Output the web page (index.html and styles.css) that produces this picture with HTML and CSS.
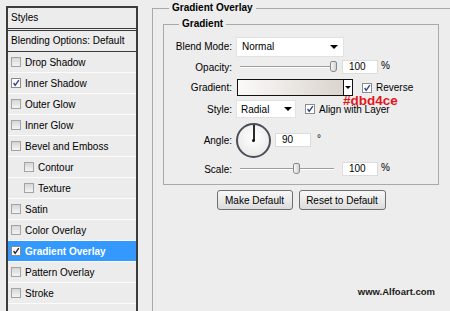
FILE: index.html
```html
<!DOCTYPE html>
<html>
<head>
	<title>Layer Style - Gradient Overlay</title>
	<meta charset="utf-8">
	<link rel="stylesheet" href="styles.css">
</head>
<body>
	<div class="styles-panel">
		<div class="panel-title">Styles</div>
		<div class="panel-blend">Blending Options: Default</div>
		<ul class="layer-list">
			<li><span class="cb"></span>Drop Shadow</li>
			<li><span class="cb on"><svg viewBox="0 0 10 10"><path d="M2 5 L4 8 L8.5 1.5" /></svg></span>Inner Shadow</li>
			<li><span class="cb"></span>Outer Glow</li>
			<li><span class="cb"></span>Inner Glow</li>
			<li><span class="cb"></span>Bevel and Emboss</li>
			<li class="sub"><span class="cb"></span>Contour</li>
			<li class="sub"><span class="cb"></span>Texture</li>
			<li><span class="cb"></span>Satin</li>
			<li><span class="cb"></span>Color Overlay</li>
			<li class="active"><span class="cb on"><svg viewBox="0 0 10 10"><path d="M2 5 L4 8 L8.5 1.5" /></svg></span>Gradient Overlay</li>
			<li><span class="cb"></span>Pattern Overlay</li>
			<li><span class="cb"></span>Stroke</li>
		</ul>
	</div>

	<div class="effect">
		<fieldset class="group outer">
			<legend>Gradient Overlay</legend>
			<fieldset class="group inner">
				<legend>Gradient</legend>

				<div class="row r-blend">
					<label class="lbl">Blend Mode:</label>
					<div class="select wide"><span>Normal</span><i class="arrow"></i></div>
				</div>

				<div class="row r-opacity">
					<label class="lbl">Opacity:</label>
					<div class="slider"><i class="thumb" style="left:94px"></i></div>
					<span class="num">100</span><span class="unit">%</span>
				</div>

				<div class="row r-gradient">
					<label class="lbl">Gradient:</label>
					<div class="swatch"></div>
					<div class="swatch-drop"><i class="arrow small"></i></div>
					<div class="check"><span class="cb on"><svg viewBox="0 0 10 10"><path d="M2 5 L4 8 L8.5 1.5" /></svg></span>Reverse</div>
					<span class="hex">#dbd4ce</span>
				</div>

				<div class="row r-style">
					<label class="lbl">Style:</label>
					<div class="select short"><span>Radial</span><i class="arrow"></i></div>
					<div class="check"><span class="cb on"><svg viewBox="0 0 10 10"><path d="M2 5 L4 8 L8.5 1.5" /></svg></span>Align with Layer</div>
				</div>

				<div class="row r-angle">
					<label class="lbl">Angle:</label>
					<div class="dial"></div>
					<span class="num angle-num">90</span><span class="deg">°</span>
				</div>

				<div class="row r-scale">
					<label class="lbl">Scale:</label>
					<div class="slider"><i class="thumb" style="left:57px"></i></div>
					<span class="num">100</span><span class="unit">%</span>
				</div>
			</fieldset>

			<div class="buttons">
				<button class="btn btn-make">Make Default</button>
				<button class="btn btn-reset">Reset to Default</button>
			</div>

			<div class="credit">www.Alfoart.com</div>
		</fieldset>
	</div>
</body>
</html>
```
FILE: styles.css
```css
body {
	margin: 0;
	height: 311px;
	overflow: hidden;
	display: flex;
	align-items: flex-start;
	background-color: #ededed;
	font-family: "Liberation Sans", Arial, sans-serif;
	font-size: 10px;
	color: #000;
}

/* left list of layer styles */
.styles-panel {
	box-sizing: border-box;
	width: 132px;
	height: 305px;
	margin: 6px 0 0 6px;
	border: 2px solid #3c3c3c;
	border-bottom: 0;
	background-color: #ececec;
	flex: none;
}
.panel-title {
	height: 20px;
	line-height: 20px;
	padding-left: 3px;
	border-bottom: 3px double #3c3c3c;
}
.panel-blend {
	height: 20px;
	line-height: 20px;
	padding-left: 3px;
	border-bottom: 1px solid #3c3c3c;
}
.layer-list {
	list-style: none;
	margin: 0;
	padding: 0;
}
.layer-list li {
	display: flex;
	align-items: center;
	gap: 4px;
	height: 20px;
	padding-left: 3px;
	border-bottom: 1px solid #fbfbfb;
}
.layer-list li.sub {
	padding-left: 16px;
}
.layer-list li.active {
	background-color: #3399ff;
	color: #fff;
	font-weight: bold;
}

/* checkbox */
.cb {
	box-sizing: border-box;
	display: inline-flex;
	align-items: center;
	justify-content: center;
	width: 10px;
	height: 10px;
	border: 1px solid #a3a3a3;
	background: linear-gradient(#d6d6d6, #f4f4f4);
	flex: none;
}
.cb.on {
	background: #fff;
	border-color: #8c8c8c;
}
.cb svg {
	width: 8px;
	height: 8px;
}
.cb path {
	fill: none;
	stroke: #2d3f8f;
	stroke-width: 1.7;
}
.active .cb path {
	stroke: #222;
}

/* right side */
.effect {
	margin: 2px 0 0 14px;
}
.group {
	margin: 0;
	padding: 0;
	border: 1px solid #a9a9a9;
	min-width: 0;
}
.group > legend {
	padding: 0 3px;
	font-weight: bold;
	line-height: 12px;
}
.outer {
	box-sizing: border-box;
	width: 310px;
	height: 309px;
	border-bottom: 0;
}
.outer > legend {
	margin-left: 16px;
}
.inner {
	box-sizing: border-box;
	width: 276px;
	margin: 4px 0 0 10px;
	padding: 6px 0 6px 0;
}
.inner > legend {
	margin-left: 15px;
}

.row {
	display: flex;
	align-items: center;
}
.lbl {
	width: 68px;
	margin-right: 4px;
	text-align: right;
	flex: none;
}
.r-blend { height: 21px; }
.r-opacity { height: 20px; }
.r-gradient { height: 21px; position: relative; }
.r-style { height: 22px; }
.r-angle { height: 40px; }
.r-scale { height: 18px; }

.select {
	box-sizing: border-box;
	display: flex;
	align-items: center;
	justify-content: space-between;
	height: 20px;
	padding: 0 5px;
	background-color: #fff;
	border: 1px solid #e2e2e2;
	flex: none;
}
.select.wide {
	width: 108px;
}
.select.short {
	width: 60px;
	height: 18px;
	padding: 0 3px 0 4px;
}
.arrow {
	width: 0;
	height: 0;
	border-left: 4px solid transparent;
	border-right: 4px solid transparent;
	border-top: 4px solid #000;
}
.arrow.small {
	border-left-width: 3px;
	border-right-width: 3px;
	border-top-width: 3px;
}

.slider {
	position: relative;
	width: 106px;
	height: 14px;
	flex: none;
}
.slider::before {
	content: "";
	position: absolute;
	left: 4px;
	right: 8px;
	top: 6px;
	border-top: 1px solid #9d9d9d;
	border-bottom: 1px solid #fff;
}
.thumb {
	position: absolute;
	top: 1px;
	box-sizing: border-box;
	width: 7px;
	height: 11px;
	border: 1px solid #888;
	border-radius: 2px 2px 3px 3px;
	background: linear-gradient(90deg, #f8f8f8, #d2d2d2);
}

.num {
	box-sizing: border-box;
	width: 36px;
	height: 14px;
	line-height: 12px;
	padding-left: 6px;
	background-color: #fff;
	border: 1px solid #dcdcdc;
	flex: none;
}
.unit {
	margin: 0 0 3px 3px;
}

.swatch {
	box-sizing: border-box;
	width: 107px;
	height: 17px;
	margin-left: 1px;
	border: 1px solid #111;
	background: linear-gradient(90deg, #fbfaf9, #dbd4ce);
	flex: none;
}
.swatch-drop {
	box-sizing: border-box;
	display: flex;
	align-items: center;
	justify-content: center;
	width: 10px;
	height: 17px;
	margin-left: -1px;
	border: 1px solid #111;
	background-color: #fff;
	flex: none;
}
.check {
	display: flex;
	align-items: center;
	gap: 4px;
	margin-left: 9px;
}
.hex {
	position: absolute;
	left: 179px;
	top: 17px;
	color: #e3151c;
	font-size: 13.5px;
	font-weight: bold;
	line-height: 1;
}

.dial {
	position: relative;
	box-sizing: border-box;
	width: 35px;
	height: 35px;
	border: 2px solid #4b4e58;
	border-radius: 50%;
	background: radial-gradient(circle at 50% 40%, #fff, #e4e4e4);
	flex: none;
}
.dial::before {
	content: "";
	position: absolute;
	left: 50%;
	top: 0;
	width: 2px;
	height: 16px;
	margin-left: -1px;
	background-color: #2a2a2a;
}
.dial::after {
	content: "";
	position: absolute;
	left: 50%;
	top: 50%;
	width: 3px;
	height: 3px;
	margin: -1px 0 0 -2px;
	border-radius: 50%;
	background-color: #111;
}
.angle-num {
	margin-left: 4px;
}
.deg {
	margin: 0 0 4px 6px;
}

.buttons {
	display: flex;
	justify-content: center;
	gap: 6px;
	width: 276px;
	margin: 5px 0 0 10px;
}
.btn {
	box-sizing: border-box;
	height: 20px;
	padding: 0;
	border: 1px solid #6f6f6f;
	border-radius: 3px;
	background: linear-gradient(#f8f8f8, #dcdcdc);
	font-family: inherit;
	font-size: 10px;
	color: #000;
}
.btn-make { width: 76px; }
.btn-reset { width: 87px; }

.credit {
	width: 282px;
	margin-top: 76px;
	text-align: right;
	font-weight: bold;
	font-size: 9.5px;
	line-height: 12px;
	color: #1a1a1a;
}
```
